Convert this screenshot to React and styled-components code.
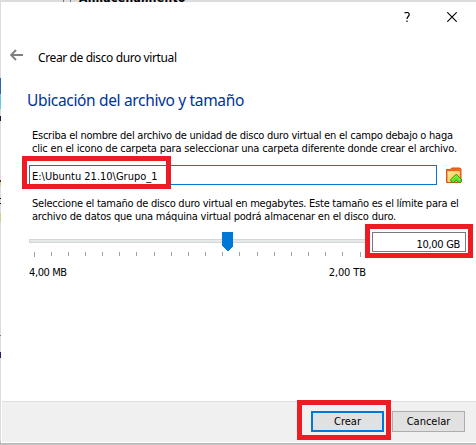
import React from "react";
import styled, { createGlobalStyle } from "styled-components";

const Global = createGlobalStyle`
  * { box-sizing: border-box; }
  html, body { margin: 0; overflow: hidden; background: #cfcfcf; }
`;
const Desktop = styled.div`
  position: relative;
  width: 476px;
  height: 445px;
  padding: 2px 0 0 1px;
  overflow: hidden;
  background: linear-gradient(#dcdcdc 0 440px, #b4b4b4 443px, #c8c8c8);
  color: #000;
  font: 11px/13px "DejaVu Sans Condensed", "DejaVu Sans", sans-serif;
  font-stretch: condensed;
`;
const BackTitle = styled.div`
  position: absolute;
  left: 79px;
  top: -9px;
  font: bold 12px/14px "DejaVu Sans Condensed", sans-serif;
  letter-spacing: 0.35px;
  white-space: nowrap;
`;
const BackMark = styled.i`
  position: absolute;
  left: ${(p) => p.$x || 0}px;
  top: ${(p) => p.$y}px;
  width: 1px;
  height: ${(p) => p.$h}px;
  background: ${(p) => p.$c};
`;
const Dialog = styled.main`
  position: relative;
  width: 475px;
  height: 441px;
  display: flex;
  flex-direction: column;
  background: #fff;
`;
const WindowControls = styled.div`
  height: 30px;
  padding: 10px 19px 0 0;
  display: flex;
  justify-content: flex-end;
  gap: 37px;
`;
const Line = styled.div`
  white-space: nowrap;
  letter-spacing: ${(p) => p.$ls || 0}px;
`;
const TitleBar = styled.header`
  height: 50px;
  padding: 17px 0 0 9px;
  display: flex;
  gap: 15px;
  font: 12px/18px "Noto Sans", sans-serif;
`;
const Heading = styled.h1`
  margin: 7px 0 0 26px;
  font: 400 15.5px/22px "Noto Sans", sans-serif;
  letter-spacing: ${(p) => p.$ls}px;
  color: #003399;
  white-space: nowrap;
`;
const Paragraph = styled.div`
  margin: ${(p) => p.$top}px 0 0 31px;
`;
const PathRow = styled.div`
  display: flex;
  margin: 10px 0 0 28px;
  gap: 9px;
  height: 20px;
  svg { margin-top: 2px; }
`;
const Field = styled.div`
  width: ${(p) => p.$w}px;
  height: 20px;
  border: 1px solid ${(p) => p.$c};
  padding: ${(p) => p.$top}px 5px 0 2px;
  text-align: ${(p) => p.$align || "left"};
  background: #fff;
`;
const SizeRow = styled.div`
  display: flex;
  margin: 8px 0 0 28px;
  height: 48px;
`;
const SizeInput = styled(Field)`
  margin-top: 1px;
`;
const Slider = styled.div`
  width: 337px;
  margin-right: 6px;
`;
const Range = styled.div`
  display: flex;
  justify-content: space-between;
  margin-top: 8px;
`;
const Footer = styled.footer`
  margin: auto 0 1px 1px;
  height: 41px;
  padding: 9px 11px 0 0;
  border-top: 1px solid #dfdfdf;
  background: #f0f0f0;
  display: flex;
  justify-content: flex-end;
  gap: 8px;
`;
const Button = styled.button`
  width: 73px;
  height: 21px;
  padding: 0;
  border: ${(p) => (p.$primary ? "2px solid #0078d7" : "1px solid #adadad")};
  background: #e1e1e1;
  color: #000;
  font: inherit;
`;
const Highlight = styled.div`
  position: absolute;
  left: ${(p) => p.$x}px;
  top: ${(p) => p.$y}px;
  width: ${(p) => p.$w}px;
  height: ${(p) => p.$h}px;
  border: 5px solid #ed1c24;
  pointer-events: none;
`;

const ticks = [34, 51, 68, 85, 102, 119, 136, 154, 171, 188, 205, 222, 239, 257, 274, 291, 308, 325, 342, 360];

const SliderTrack = () => (
  <svg width="337" height="27" viewBox="29 231 337 27" shapeRendering="crispEdges" display="block">
    <path d="M29 239h337v4h-337z" fill="#d6d6d6" />
    <path d="M30 240h336v2h-336z" fill="#e7eaea" />
    {ticks.map((x, i) => (
      <rect key={x} x={x} y="252" width="1" height={i === 0 || i === 19 ? 5 : 4} fill="#a5a295" />
    ))}
    <path d="M222 232h11v14l-5 5h-1l-5-5z" fill="#0078d7" />
  </svg>
);

const FolderIcon = () => (
  <svg width="17" height="17" viewBox="0 0 17 17">
    <defs>
      <linearGradient id="paper" x1="0" y1="0" x2="1" y2="1">
        <stop offset="0" stopColor="#fff0a0" />
        <stop offset="1" stopColor="#ffb63c" />
      </linearGradient>
    </defs>
    <path d="M.5 2.5h4l1-1.5h8.5l1 1.5v13H.5z" fill="#ef681e" stroke="#d95518" />
    <path d="M1.5 4.2h12.500v10.800h-12.500z" fill="url(#paper)" />
    <path d="M10.200 7.200 15.800 12.800 14.800 15.400H12.600L10.200 13.400 7.800 15.400H5.600L4.600 12.800z" fill="#67dc27" stroke="#2f9a18" />
    <path d="m6.400 12.600 3.800-3.800 3.800 3.800" fill="none" stroke="#a0f454" />
  </svg>
);

export default function App() {
  return (
    <Desktop>
      <Global />
      <BackTitle>Almacenamiento</BackTitle>
      <BackMark $x={63} $y={0} $h={2} $c="#777" />
      <BackMark $x={70} $y={0} $h={2} $c="#777" />
      <BackMark $y={78} $h={16} $c="#2863b5" />
      <BackMark $y={94} $h={15} $c="#63cbe8" />
      <BackMark $y={116} $h={5} $c="#21123d" />
      <BackMark $y={180} $h={2} $c="#6b2a20" />
      <BackMark $y={182} $h={4} $c="#d0cf90" />
      <BackMark $y={198} $h={1} $c="#111" />
      <BackMark $y={203} $h={1} $c="#111" />
      <BackMark $y={213} $h={9} $c="#d0cf90" />
      <BackMark $y={335} $h={1} $c="#777" />
      <BackMark $y={352} $h={6} $c="#28206b" />
      <Dialog>
        <WindowControls>
          <svg width="6" height="10" viewBox="0 0 6 10">
            <path d="M.5 1Q1.500.5 2.700.5 5.200.5 5.200 2.500C5.200 4.500 3 4.500 3 7M3 8.500V10" fill="none" stroke="#000" strokeWidth="1.2" />
          </svg>
          <svg width="10" height="10" viewBox="0 0 10 10">
            <path d="M.3.3 9.700 9.700M9.700.3.3 9.700" stroke="#000" strokeWidth="1.1" />
          </svg>
        </WindowControls>
        <TitleBar>
          <svg width="13" height="12" viewBox="0 0 13 12">
            <path d="M1 6h12M6 1 1 6l5 5" fill="none" stroke="#808080" strokeWidth="1.9" />
          </svg>
          <Line $ls={-0.39}>Crear de disco duro virtual</Line>
        </TitleBar>
        <Heading $ls={-0.34}>Ubicación del archivo y tamaño</Heading>
        <Paragraph $top={18}>
          <Line $ls={-0.245}>Escriba el nombre del archivo de unidad de disco duro virtual en el campo debajo o haga</Line>
          <Line $ls={-0.2}>clic en el icono de carpeta para seleccionar una carpeta diferente donde crear el archivo.</Line>
        </Paragraph>
        <PathRow>
          <Field $w={408} $c="#0078d7" $top={4}><Line>E:\Ubuntu 21.10\Grupo_1</Line></Field>
          <FolderIcon />
        </PathRow>
        <Paragraph $top={12}>
          <Line $ls={-0.25}>Seleccione el tamaño de disco duro virtual en megabytes. Este tamaño es el límite para el</Line>
          <Line $ls={-0.21}>archivo de datos que una máquina virtual podrá almacenar en el disco duro.</Line>
        </Paragraph>
        <SizeRow>
          <Slider>
            <SliderTrack />
            <Range><Line $ls={-0.4}>4,00 MB</Line><Line $ls={-0.1}>2,00 TB</Line></Range>
          </Slider>
          <SizeInput $w={94} $c="#7a7a7a" $align="right" $top={5}><Line $ls={-0.3}>10,00 GB</Line></SizeInput>
        </SizeRow>
        <Footer>
          <Button $primary>Crear</Button>
          <Button>Cancelar</Button>
        </Footer>
      </Dialog>
      <Highlight $x={22} $y={156} $w={149} $h={33} />
      <Highlight $x={365} $y={224} $w={108} $h={34} />
      <Highlight $x={297} $y={400} $w={94} $h={40} />
    </Desktop>
  );
}
